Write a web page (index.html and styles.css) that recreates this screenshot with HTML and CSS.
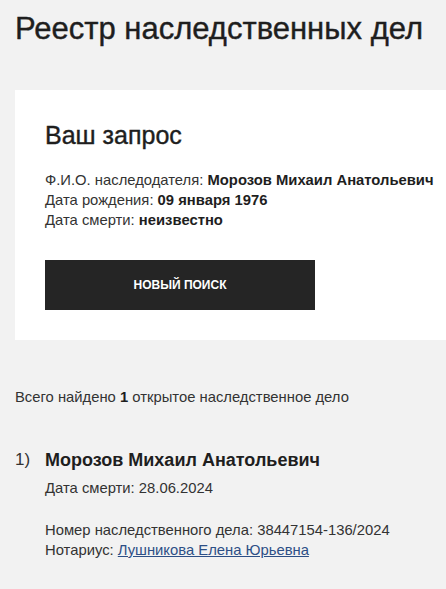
FILE: index.html
```html
<!DOCTYPE html>
<html>
<head>
    <meta charset="utf-8" />
    <title>Реестр наследственных дел</title>
    <link rel="stylesheet" href="styles.css">
</head>
<body>
    <header>
        <h1 class="cim">Реестр наследственных дел</h1>
    </header>
    <div class="zapros">
        <h2>Ваш запрос</h2>
        <p class="dannye">
            Ф.И.О. наследодателя: <b>Морозов Михаил Анатольевич</b><br>
            Дата рождения: <b>09 января 1976</b><br>
            Дата смерти: <b>неизвестно</b>
        </p>
        <button class="knopka">Новый поиск</button>
    </div>
    <p class="itogo">Всего найдено <b>1</b> открытое наследственное дело</p>
    <ol class="spisok">
        <li>
            <span class="nomer">1)</span>
            <div class="delo">
                <h3>Морозов Михаил Анатольевич</h3>
                <p>Дата смерти: 28.06.2024</p>
                <p class="rekvizity">
                    Номер наследственного дела: 38447154-136/2024<br>
                    Нотариус: <a href="#">Лушникова Елена Юрьевна</a>
                </p>
            </div>
        </li>
    </ol>
</body>
</html>
```

FILE: styles.css
```css
body {
    margin: 0;
    padding: 0 0 0 15px;
    background-color: #f2f2f2;
    color: #333;
    font-family: "Liberation Sans", Arial, sans-serif;
    font-size: 14.8px;
}

b, h1, h2, h3 {
    color: #1e1e1e;
}

.cim {
    margin: 0;
    padding: 11px 0 43px;
    font-size: 31px;
    font-weight: normal;
    line-height: 36px;
    -webkit-text-stroke: 0.4px #1e1e1e;
}

.zapros {
    background-color: #fff;
    padding: 28px 8px 30px 30px;
}

.zapros h2 {
    margin: 0;
    font-size: 25px;
    font-weight: normal;
    line-height: 34px;
    -webkit-text-stroke: 0.4px #1e1e1e;
}

.dannye {
    margin: 18px 0 0;
    line-height: 20px;
    white-space: nowrap;
}

.knopka {
    display: block;
    margin-top: 30px;
    width: 270px;
    height: 50px;
    border: none;
    background-color: #252525;
    color: #fff;
    font-family: inherit;
    font-size: 12px;
    font-weight: bold;
    text-transform: uppercase;
}

.itogo {
    margin: 47px 0 0;
    line-height: 20px;
}

.spisok {
    list-style: none;
    margin: 39px 0 0;
    padding: 0;
}

.spisok li {
    display: flex;
}

.nomer {
    width: 30px;
    font-size: 17px;
    line-height: 28px;
}

.delo h3 {
    margin: 0;
    font-size: 18px;
    line-height: 28px;
}

.delo p {
    margin: 4px 0 0;
    line-height: 20px;
}

.delo .rekvizity {
    margin-top: 22px;
}

.delo a {
    color: #2d4f86;
}
```
